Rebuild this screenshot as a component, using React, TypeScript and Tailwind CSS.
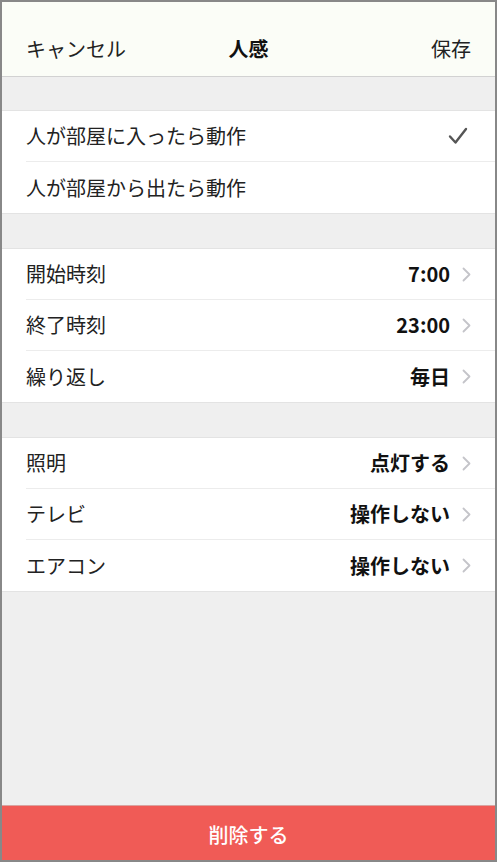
import { ReactNode } from "react";

const font = { fontFamily: '"Noto Sans CJK JP", "Noto Sans", sans-serif' };

function Chevron() {
  return (
    <svg width="9" height="15" viewBox="0 0 9 15" className="ml-3 shrink-0">
      <path d="M1.5 1.5 L7.5 7.5 L1.5 13.5" fill="none" stroke="#c4c4c9" strokeWidth="1.8" strokeLinecap="round" strokeLinejoin="round" />
    </svg>
  );
}

function Check() {
  return (
    <svg width="20" height="18" viewBox="0 0 20 18" className="mr-[3px]">
      <path d="M2 9.5 L7.5 15.5 L18 2" fill="none" stroke="#555" strokeWidth="2.4" strokeLinecap="round" strokeLinejoin="round" />
    </svg>
  );
}

function Row({ label, right, last }: { label: string; right?: ReactNode; last?: boolean }) {
  return (
    <div className="pl-6 bg-white">
      <div className={`h-[51px] flex items-center justify-between pr-6 ${last ? "" : "border-b border-[#ececec]"}`}>
        <span className="text-[20px] text-[#222]">{label}</span>
        {right}
      </div>
    </div>
  );
}

function Value({ text }: { text: string }) {
  return (
    <span className="flex items-center">
      <span className="text-[20px] font-bold text-[#111]">{text}</span>
      <Chevron />
    </span>
  );
}

function Group({ children }: { children: ReactNode }) {
  return <div className="border-y border-[#e3e3e3] bg-white">{children}</div>;
}

export default function App() {
  return (
    <div style={font} className="w-[497px] h-[862px] border-2 border-[#888] bg-[#efefef] flex flex-col">
      <div className="h-[75px] shrink-0 bg-[#fbfdf7] border-b border-[#d2d2d2] pt-5 px-6 grid grid-cols-3 items-center text-[20px] text-[#222]">
        <span>キャンセル</span>
        <span className="font-bold text-[#111] text-center">人感</span>
        <span className="text-right">保存</span>
      </div>
      <div className="h-[33px] shrink-0" />
      <Group>
        <Row label="人が部屋に入ったら動作" right={<Check />} />
        <Row label="人が部屋から出たら動作" last />
      </Group>
      <div className="h-[34px] shrink-0" />
      <Group>
        <Row label="開始時刻" right={<Value text="7:00" />} />
        <Row label="終了時刻" right={<Value text="23:00" />} />
        <Row label="繰り返し" right={<Value text="毎日" />} last />
      </Group>
      <div className="h-[34px] shrink-0" />
      <Group>
        <Row label="照明" right={<Value text="点灯する" />} />
        <Row label="テレビ" right={<Value text="操作しない" />} />
        <Row label="エアコン" right={<Value text="操作しない" />} last />
      </Group>
      <div className="flex-1" />
      <button className="h-[55px] shrink-0 bg-[#f05b56] text-white text-[20px] font-medium flex items-center justify-center pt-1 border-t border-[#d9a3a0]">
        削除する
      </button>
    </div>
  );
}
